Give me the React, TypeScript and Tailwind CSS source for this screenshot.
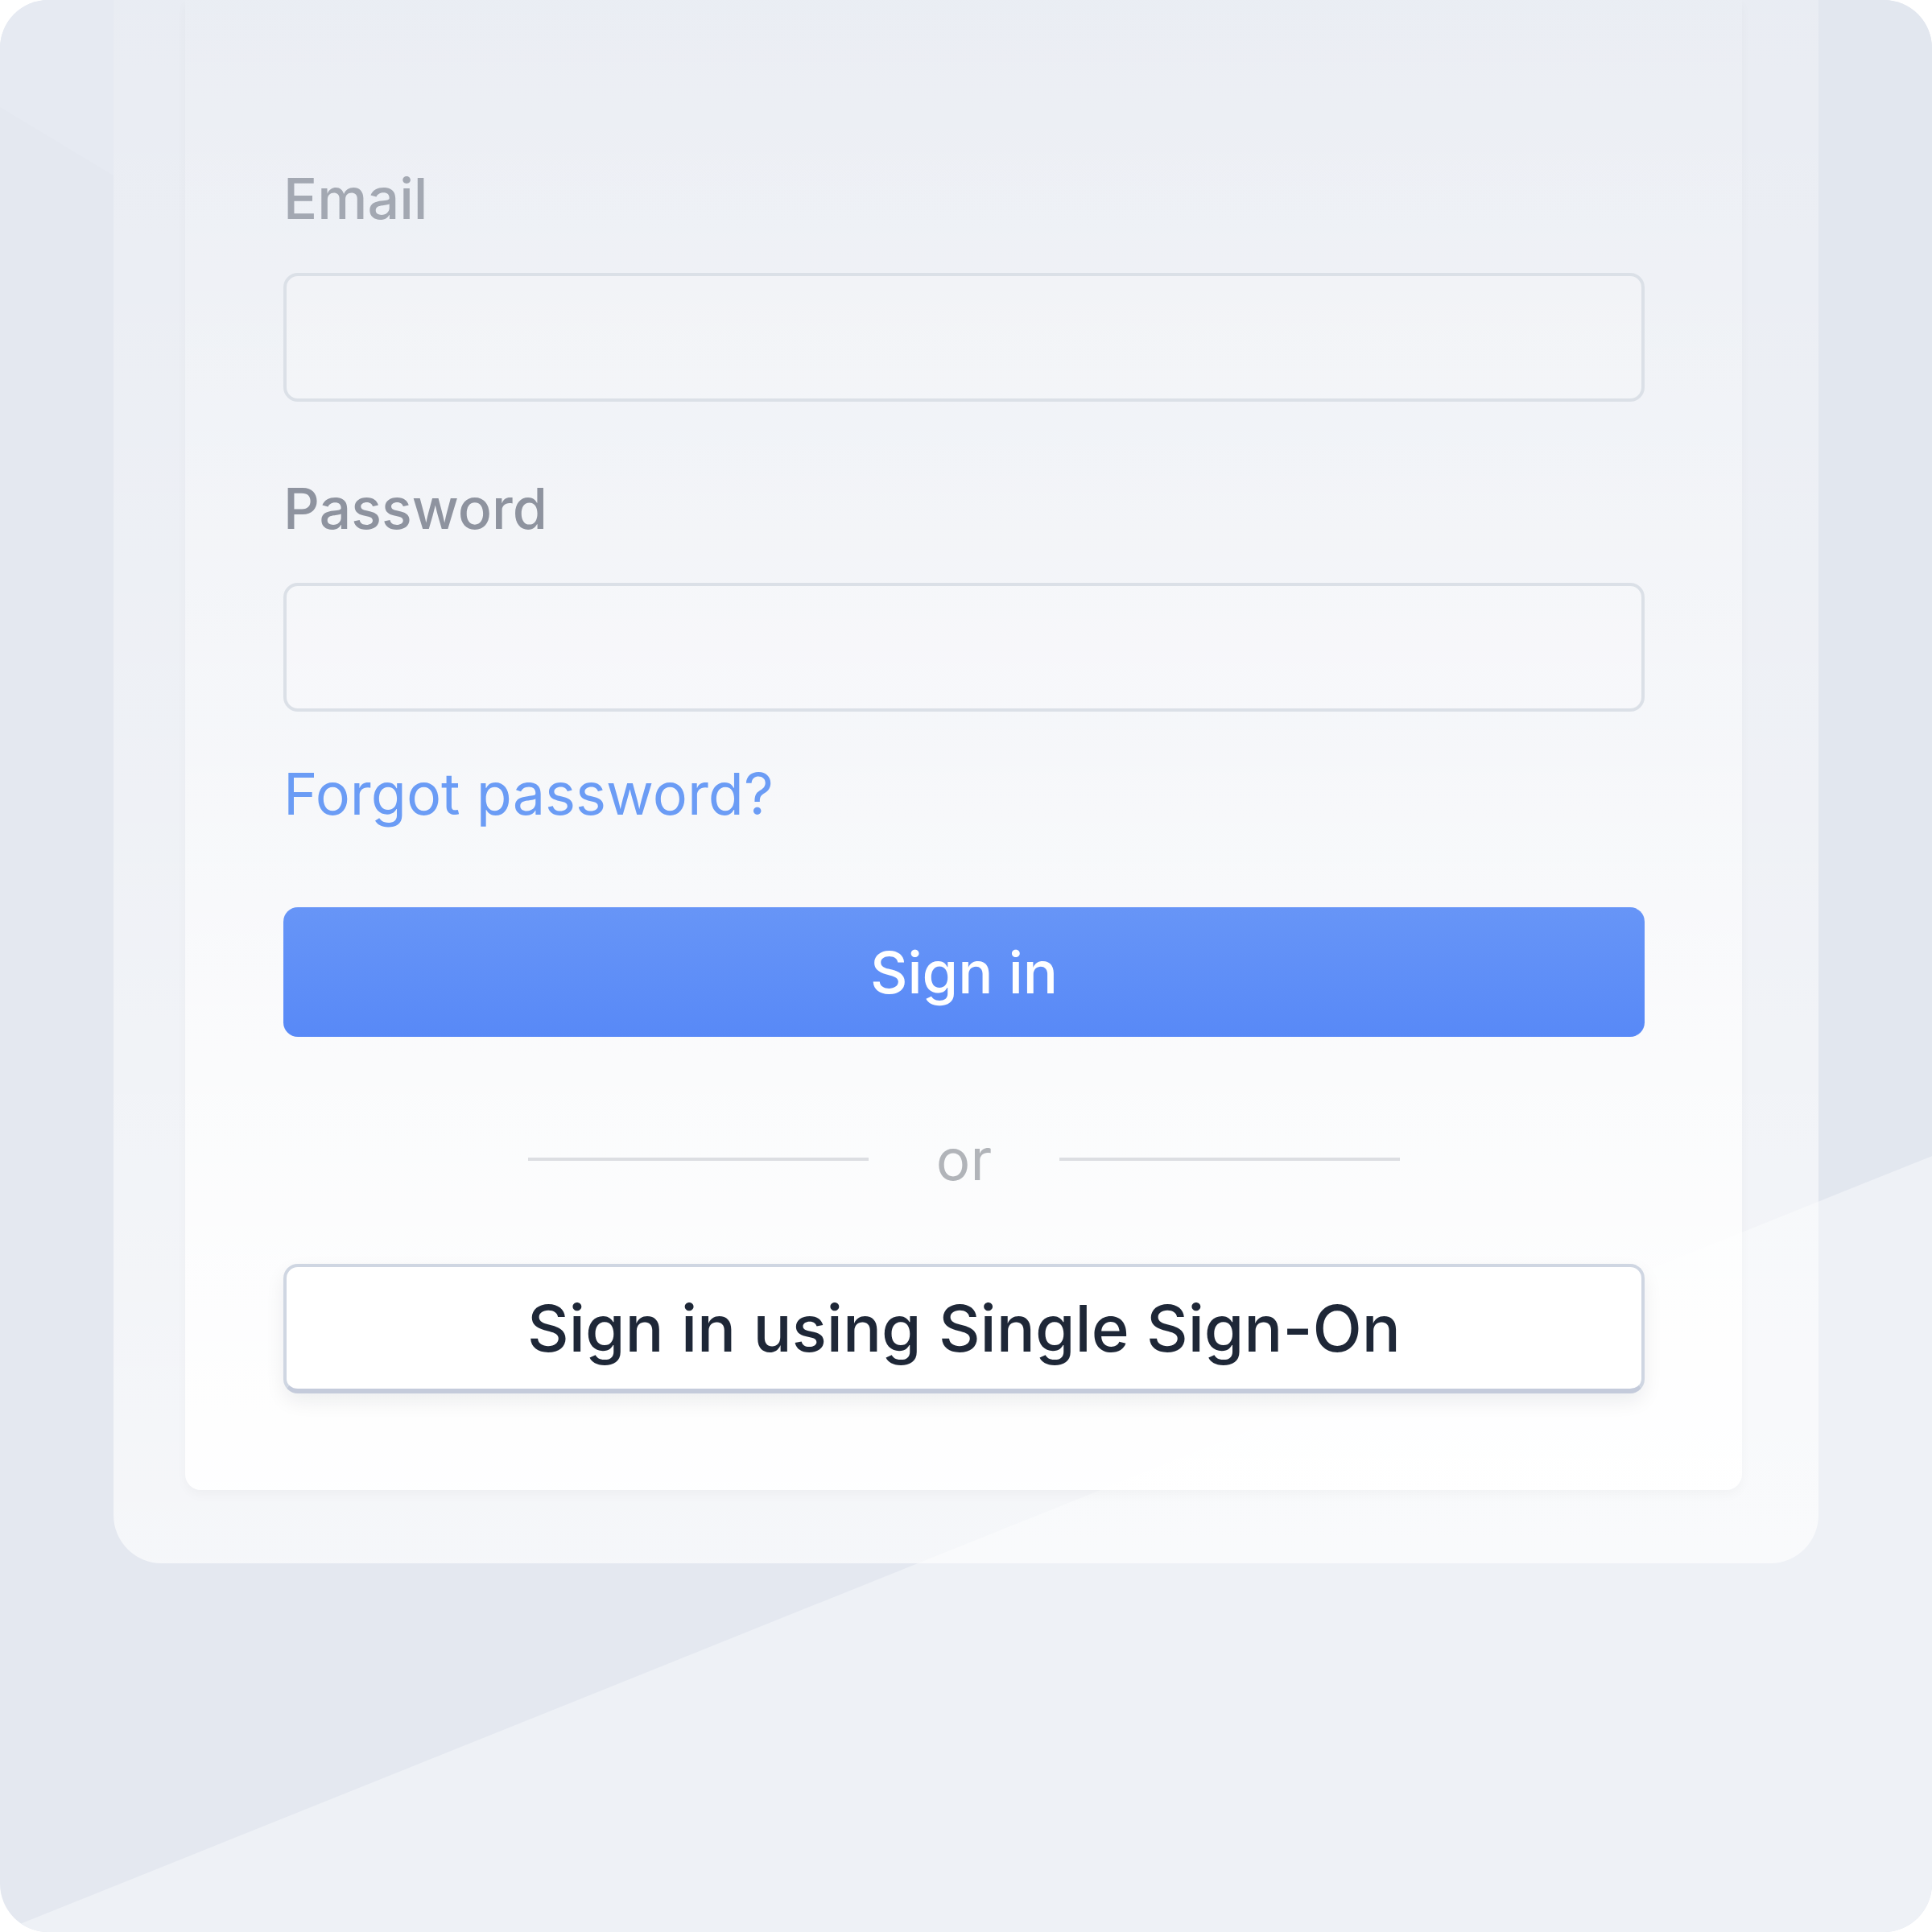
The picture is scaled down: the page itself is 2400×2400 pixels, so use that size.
import React from "react";

function Field({ label, labelColor }: { label: string; labelColor: string }) {
  return (
    <div className="flex flex-col">
      <label className={`text-[70px] leading-[70px] font-medium ${labelColor}`}>{label}</label>
      <div className="mt-[57px] h-[160px] rounded-[18px] border-[4px] border-[#dbe0e7] bg-white/20" />
    </div>
  );
}

export default function App() {
  return (
    <div className="bg-white">
      <div className="relative w-[2400px] h-[2400px] overflow-hidden rounded-[60px] bg-[#e4e8f0] [font-family:Inter,'Noto_Sans',sans-serif]">
        {/* background light ray */}
        <svg className="absolute inset-0" width="2400" height="2400" viewBox="0 0 2400 2400">
          <polygon points="0,2400 2400,1436 2400,2400" fill="#eef1f6" />
          <polygon points="0,0 141,0 141,218 0,133" fill="#e6eaf2" />
          <polygon points="2259,0 2400,0 2400,1436 2259,1492" fill="#e2e7ef" />
        </svg>

        {/* outer card */}
        <div className="relative ml-[141px] w-[2118px] h-[1942px] rounded-b-[60px] bg-gradient-to-b from-white/20 via-white/40 to-white/65 pl-[89px] pr-[95px]">
          {/* inner card */}
          <div className="h-[1851px] rounded-b-[20px] bg-gradient-to-b from-white/5 via-white/45 to-white/95 shadow-[0_6px_14px_rgba(15,23,42,0.03)] pl-[122px] pr-[121px] pt-[212px]">
            <Field label="Email" labelColor="text-[#a3a8b2]" />
            <div className="mt-[98px]">
              <Field label="Password" labelColor="text-[#8e939f]" />
            </div>

            <a className="block mt-[67px] text-[72px] leading-[70px] text-[#6b9cf5]">Forgot password?</a>

            <button className="mt-[106px] w-full h-[161px] rounded-[18px] bg-gradient-to-b from-[#6795f7] to-[#5889f7] text-white text-[72px] font-medium">
              Sign in
            </button>

            <div className="mt-[117px] flex items-center justify-center gap-[84px]">
              <div className="w-[423px] h-[4px] bg-[#dcdee2]" />
              <span className="text-[71px] leading-[70px] text-[#b1b4b9]">or</span>
              <div className="w-[423px] h-[4px] bg-[#dcdee2]" />
            </div>

            <button className="mt-[95px] w-full h-[161px] rounded-[18px] border-[4px] border-b-[6px] border-[#cfd6e2] border-b-[#c4cbdb] bg-white text-[#1e2737] text-[80px] font-medium shadow-[0_10px_24px_rgba(15,23,42,0.07)]">
              Sign in using Single Sign-On
            </button>
          </div>
        </div>
      </div>
    </div>
  );
}
